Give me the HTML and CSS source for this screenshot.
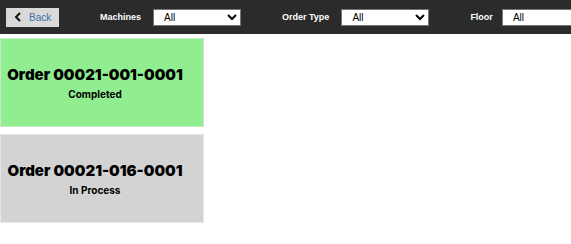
FILE: index.html
```html
<!DOCTYPE html>
<html lang="en">
<head>
  <meta charset="UTF-8" />
  <meta name="viewport" content="width=device-width, initial-scale=1.0"/>
  <title>Orders</title>
  <link rel="stylesheet" href="styles.css">
</head>
<body>
  <div class="toolbar">
    <button class="back">
      <svg class="chevron" width="8" height="10" viewBox="0 0 8 10"><path d="M6 1 L2 5 L6 9" fill="none" stroke="#111" stroke-width="2"/></svg>
      Back
    </button>
    <label class="filter">
      <span class="filter-label">Machines</span>
      <select class="filter-select"><option>All</option></select>
    </label>
    <label class="filter">
      <span class="filter-label">Order Type</span>
      <select class="filter-select"><option>All</option></select>
    </label>
    <label class="filter last">
      <span class="filter-label">Floor</span>
      <span class="select-clip">
        <select class="filter-select"><option>All</option></select>
      </span>
    </label>
  </div>

  <div class="orders">
    <div class="order completed">
      <div class="order-title">Order 00021-001-0001</div>
      <div class="order-status">Completed</div>
    </div>
    <div class="order in-process">
      <div class="order-title">Order 00021-016-0001</div>
      <div class="order-status">In Process</div>
    </div>
  </div>
</body>
</html>
```

FILE: styles.css
```css
body {
  margin: 0;
  background-color: #ffffff;
  font-family: 'Liberation Sans', Arial, sans-serif;
  overflow: hidden;
}

.toolbar {
  display: flex;
  align-items: center;
  background-color: #2b2b2b;
  height: 34px;
  padding-left: 6px;
  white-space: nowrap;
  overflow: hidden;
}

.back {
  flex-shrink: 0;
  display: flex;
  align-items: center;
  gap: 7px;
  background-color: #d9d9d9;
  border: none;
  height: 19px;
  width: 53px;
  padding: 0 0 0 8px;
  font-family: 'Liberation Sans', Arial, sans-serif;
  font-size: 10px;
  color: #3f6ea8;
  margin-right: 41px;
}

.filter {
  flex-shrink: 0;
  display: flex;
  align-items: center;
  margin-right: 41px;
}

.filter.last {
  flex-shrink: 1;
  min-width: 0;
  margin-right: 0;
}

.filter-label {
  color: #ffffff;
  font-size: 9px;
  font-weight: bold;
  margin-right: 12px;
}

.filter.last .filter-label {
  margin-right: 9px;
}

.select-clip {
  display: flex;
  width: 69px;
  overflow: hidden;
}

.filter-select {
  flex-shrink: 0;
  width: 88px;
  height: 17px;
  font-family: 'Liberation Sans', Arial, sans-serif;
  font-size: 10px;
  border: 1px solid #767676;
  background-color: #ffffff;
  padding: 0 0 0 6px;
}

.orders {
  display: flex;
  flex-direction: column;
  gap: 7px;
  padding-top: 4px;
}

.order {
  box-sizing: border-box;
  width: 204px;
  height: 89px;
  padding-right: 14px;
  border: 1px solid #e2e2e2;
  display: flex;
  flex-direction: column;
  align-items: center;
  justify-content: center;
  gap: 4px;
  font-family: Inter, sans-serif;
  color: #000000;
}

.order.completed {
  background-color: #90ee90;
  border-color: #c8e8c8;
}

.order.in-process {
  background-color: #d3d3d3;
  border-color: #e6e6e6;
}

.order-title {
  font-size: 15px;
  font-weight: 900;
}

.order-status {
  font-size: 10px;
  font-weight: 700;
}
```
